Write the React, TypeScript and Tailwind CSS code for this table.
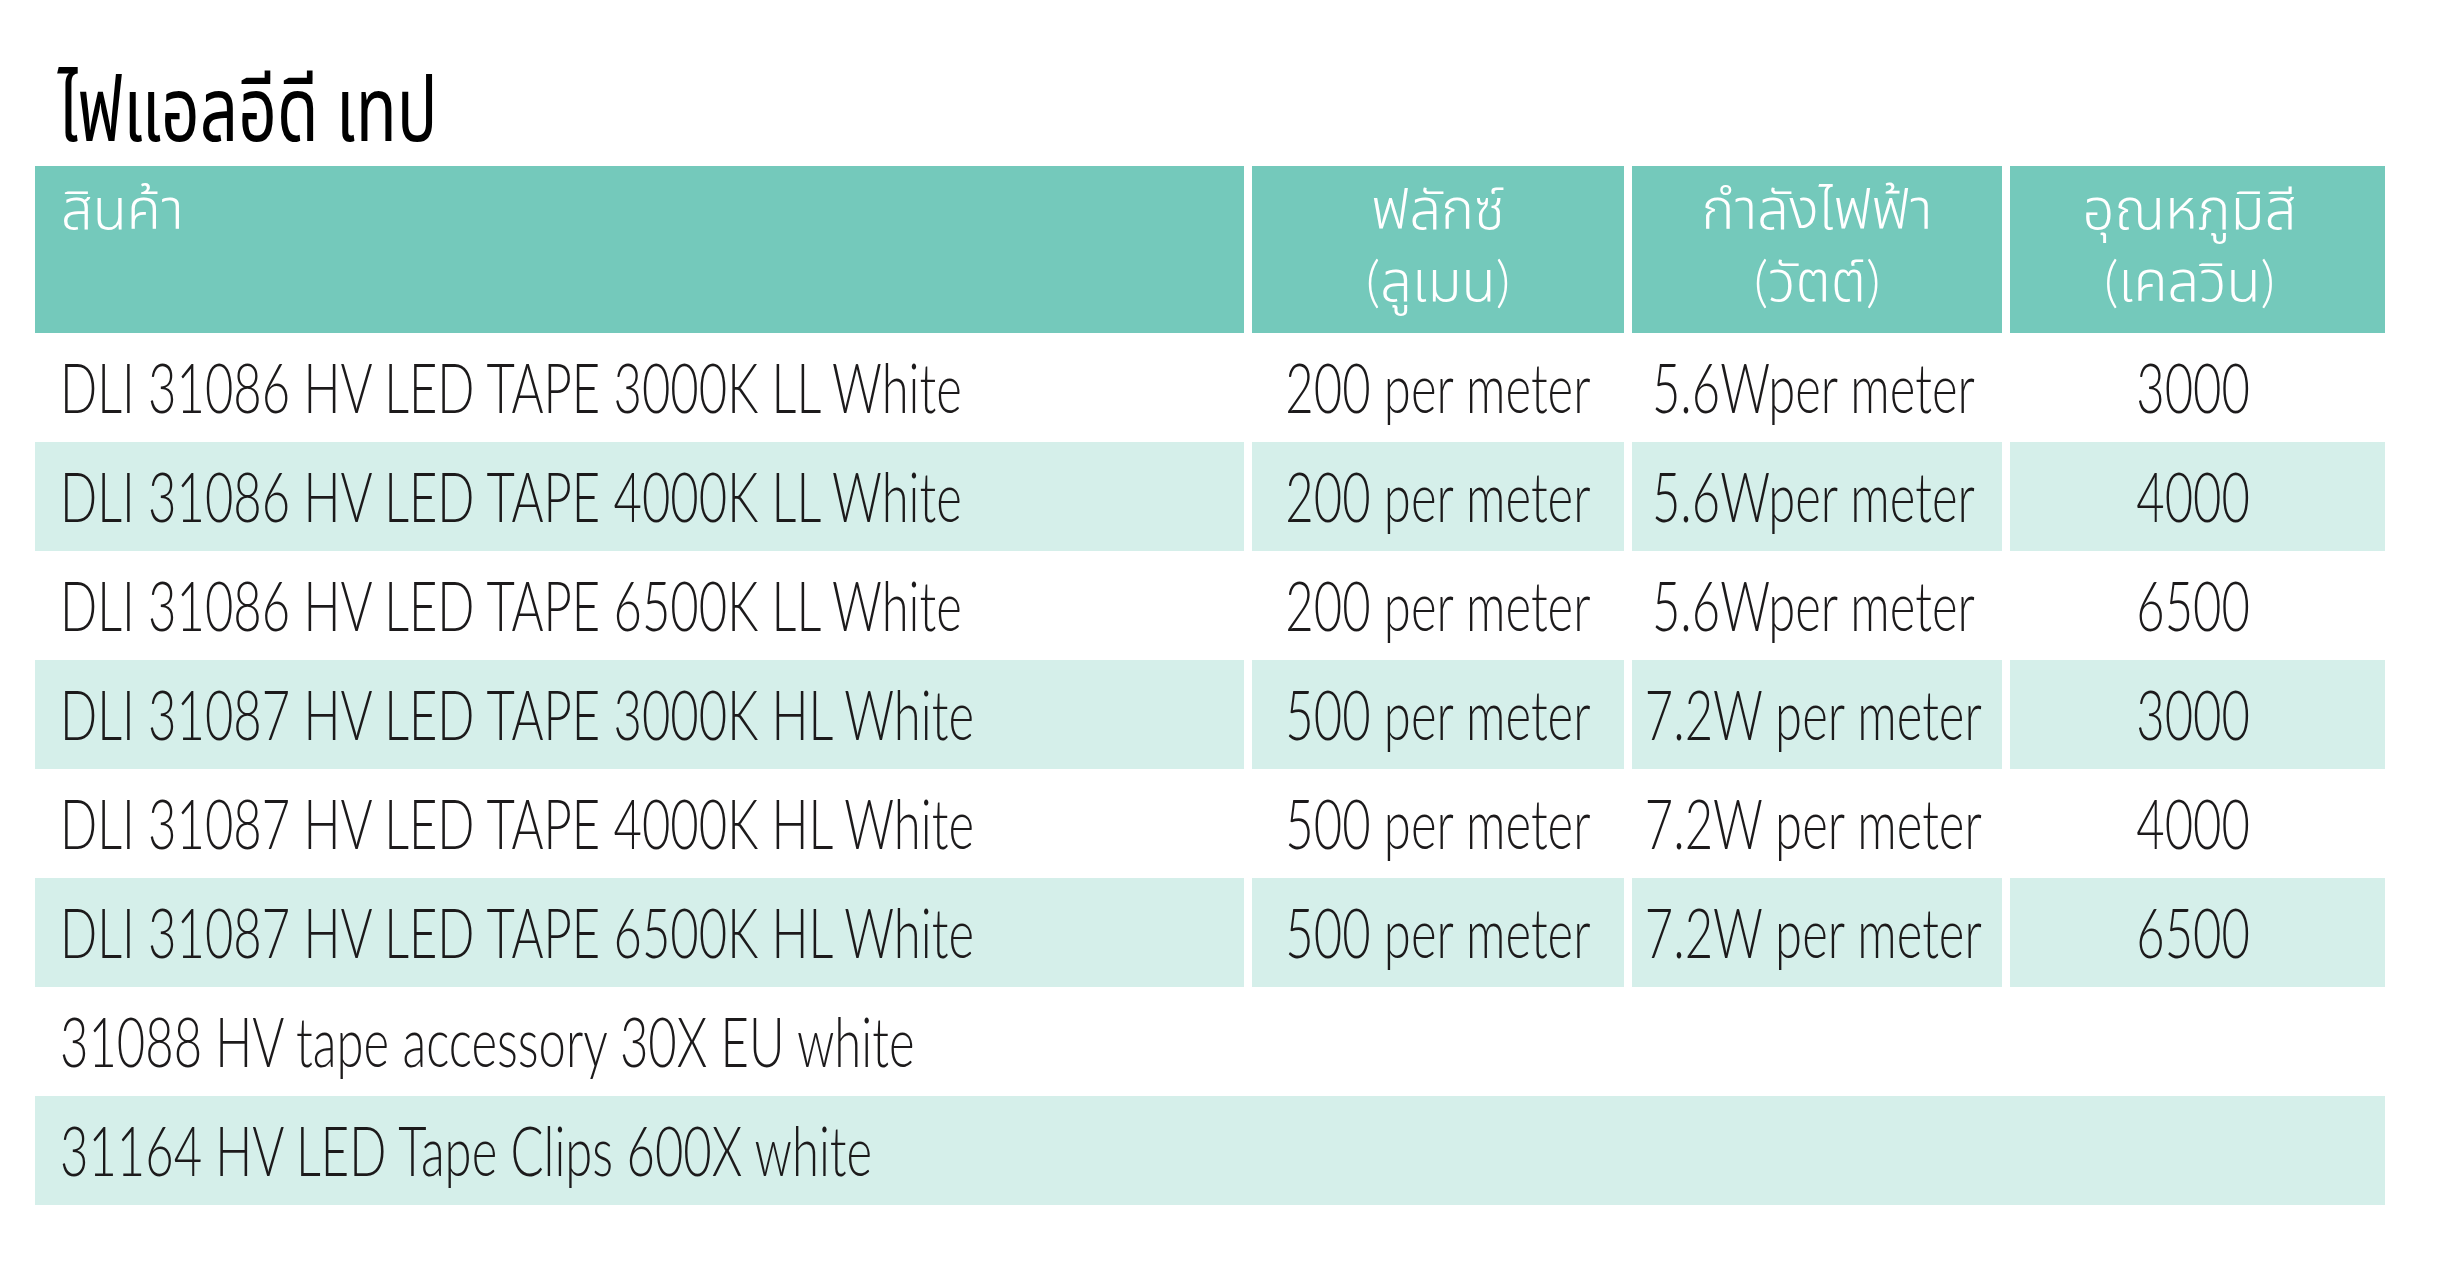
import React from 'react';

interface Product {
  name: string;
  flux: string;
  power: string;
  temp: string;
}

const products: Product[] = [
  { name: 'DLI 31086 HV LED TAPE 3000K LL White', flux: '200 per meter', power: '5.6Wper meter', temp: '3000' },
  { name: 'DLI 31086 HV LED TAPE 4000K LL White', flux: '200 per meter', power: '5.6Wper meter', temp: '4000' },
  { name: 'DLI 31086 HV LED TAPE 6500K LL White', flux: '200 per meter', power: '5.6Wper meter', temp: '6500' },
  { name: 'DLI 31087 HV LED TAPE 3000K HL White', flux: '500 per meter', power: '7.2W per meter', temp: '3000' },
  { name: 'DLI 31087 HV LED TAPE 4000K HL White', flux: '500 per meter', power: '7.2W per meter', temp: '4000' },
  { name: 'DLI 31087 HV LED TAPE 6500K HL White', flux: '500 per meter', power: '7.2W per meter', temp: '6500' },
];

const accessories = ['31088 HV tape accessory 30X EU white', '31164 HV LED Tape Clips 600X white'];

// the catalogue face is a narrow light sans, so squeeze the text horizontally
function Left({ children }: { children: React.ReactNode }) {
  return <span className="inline-block origin-left scale-x-[0.71] whitespace-nowrap">{children}</span>;
}

function Center({ children }: { children: React.ReactNode }) {
  return <span className="inline-block origin-center scale-x-[0.71] whitespace-nowrap">{children}</span>;
}

export default function App() {
  return (
    <div className="min-h-screen bg-white text-[#1c1a1b] font-['Lato','Noto_Sans_Thai',sans-serif]">
      <div className="pl-[35px] w-[2385px]">
        {/* Title */}
        <div className="h-[166px] flex items-end pb-[15px] pl-[23px]">
          <h1 className="inline-block origin-left scale-x-[0.75] text-[90px] leading-none font-normal text-black whitespace-nowrap">
            ไฟแอลอีดี เทป
          </h1>
        </div>

        {/* Table */}
        <div className="grid grid-cols-[1209px_372px_370px_375px] gap-x-[8px] font-light">
          {/* Header */}
          <div className="h-[167px] bg-[#74c9bb] text-white text-[56px] leading-[72px] pl-[26px] pt-[6px]">
            สินค้า
          </div>
          <div className="h-[167px] bg-[#74c9bb] text-white text-[56px] leading-[72px] text-center pt-[6px]">
            <div>ฟลักซ์</div>
            <div>(ลูเมน)</div>
          </div>
          <div className="h-[167px] bg-[#74c9bb] text-white text-[56px] leading-[72px] text-center pt-[6px]">
            <div>กำลังไฟฟ้า</div>
            <div>(วัตต์)</div>
          </div>
          <div className="h-[167px] bg-[#74c9bb] text-white text-[56px] leading-[72px] text-center pt-[6px] pr-[16px]">
            <div>อุณหภูมิสี</div>
            <div>(เคลวิน)</div>
          </div>

          {/* Product rows */}
          {products.map((p, i) => {
            const bg = i % 2 === 1 ? 'bg-[#d5efea]' : 'bg-white';
            return (
              <React.Fragment key={p.name}>
                <div className={`h-[109px] ${bg} flex items-center pl-[25px] pb-[3px] text-[69px] leading-none`}>
                  <Left>{p.name}</Left>
                </div>
                <div className={`h-[109px] ${bg} flex items-center justify-center pb-[3px] text-[69px] leading-none`}>
                  <Center>{p.flux}</Center>
                </div>
                <div className={`h-[109px] ${bg} flex items-center justify-center pb-[3px] pr-[8px] text-[69px] leading-none`}>
                  <Center>{p.power}</Center>
                </div>
                <div className={`h-[109px] ${bg} flex items-center justify-center pb-[3px] pr-[8px] text-[69px] leading-none`}>
                  <Center>{p.temp}</Center>
                </div>
              </React.Fragment>
            );
          })}

          {/* Accessory rows span the full width */}
          {accessories.map((a, i) => (
            <div
              key={a}
              className={`col-span-4 h-[109px] flex items-center pl-[25px] pb-[3px] text-[69px] leading-none ${
                i % 2 === 1 ? 'bg-[#d5efea]' : 'bg-white'
              }`}
            >
              <Left>{a}</Left>
            </div>
          ))}
        </div>
      </div>
    </div>
  );
}
